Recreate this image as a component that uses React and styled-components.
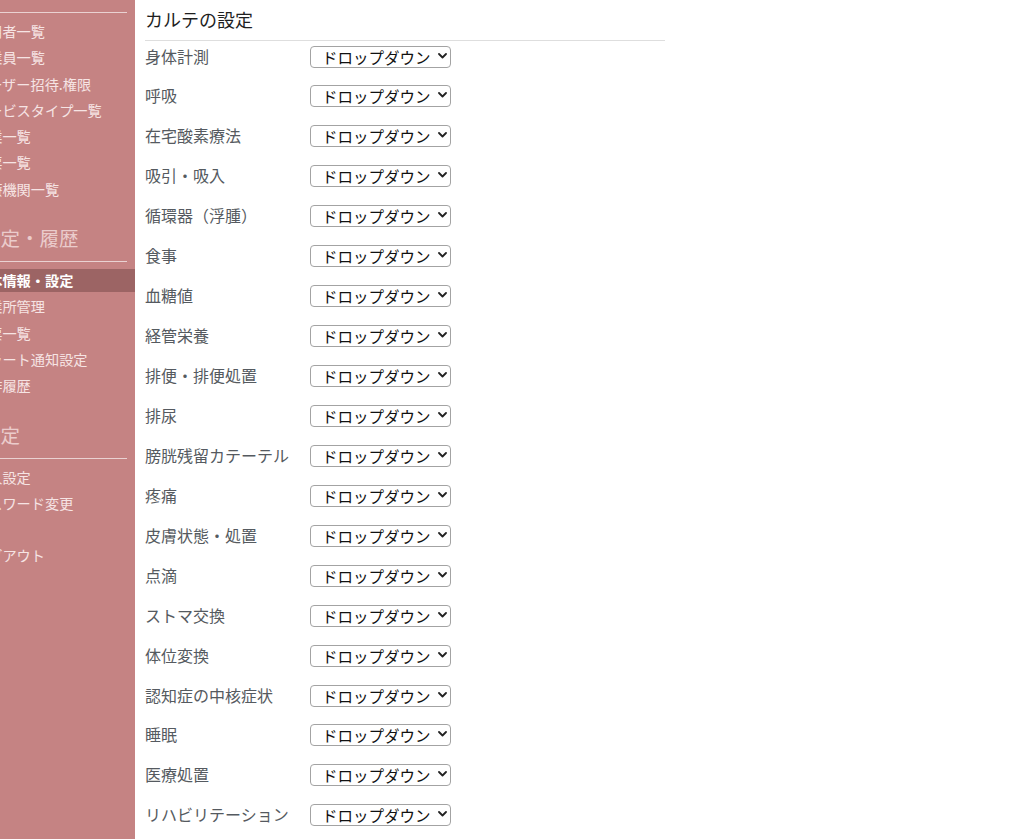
import React from "react";
import styled, { createGlobalStyle } from "styled-components";

const Global = createGlobalStyle`
  html, body { margin: 0; padding: 0; background: #fff; }
  body { font-family: "Noto Sans CJK JP", "Noto Sans", sans-serif; overflow: hidden; }
  * { box-sizing: border-box; }
`;

const Layout = styled.div`
  display: flex;
  width: 1023px;
  height: 839px;
  overflow: hidden;
`;

const Sidebar = styled.nav`
  flex: 0 0 135px;
  background: #c58383;
  overflow: hidden;
  height: 100%;
`;

const SideInner = styled.div`
  width: 161px;
  margin-left: -26px;
  padding-top: 12px;
`;

const Section = styled.div`
  display: flex;
  flex-direction: column;
  & + & { margin-top: 21px; }
`;

const SectionTitle = styled.div`
  font-size: 19.5px;
  line-height: 26px;
  color: #ebcccc;
  padding-left: 7px;
  margin-bottom: 10px;
  white-space: nowrap;
`;

const Rule = styled.div`
  height: 1px;
  background: #ead2d2;
  margin: 0 8px 7px 8px;
`;

const Item = styled.div`
  font-size: 14.2px;
  line-height: 17px;
  padding: 3px 0 3px 0;
  margin-bottom: 3.3px;
  white-space: nowrap;
  color: ${(p) => (p.$active ? "#ffffff" : "#f6e4e4")};
  font-weight: ${(p) => (p.$active ? 700 : 400)};
  background: ${(p) => (p.$active ? "#9c6464" : "transparent")};
  min-height: 23px;
`;

const Main = styled.main`
  flex: 1;
  padding: 0 10px;
`;

const Title = styled.h1`
  margin: 0;
  width: 520px;
  height: 41px;
  font-size: 18px;
  font-weight: 400;
  line-height: 38px;
  color: #1f1f1f;
  border-bottom: 1px solid #dedede;
`;

const Rows = styled.div`
  display: flex;
  flex-direction: column;
  gap: 17.95px;
  padding-top: 3.5px;
`;

const Row = styled.div`
  display: flex;
  align-items: center;
  height: 22px;
`;

const Label = styled.label`
  width: 165px;
  font-size: 16px;
  color: #555a60;
  white-space: nowrap;
`;

const SelectWrap = styled.div`
  position: relative;
  width: 141px;
  height: 22px;
`;

const Select = styled.select`
  appearance: none;
  -webkit-appearance: none;
  width: 100%;
  height: 100%;
  border: 1px solid #a3a3a3;
  border-radius: 4px;
  background: #fff;
  color: #111;
  font-family: "Noto Sans CJK JP", sans-serif;
  font-size: 15.5px;
  line-height: 20px;
  padding: 0 0 0 11px;
  margin: 0;
`;

const Chevron = styled.svg`
  position: absolute;
  right: 4.5px;
  top: 8px;
  width: 9px;
  height: 6px;
  pointer-events: none;
`;

const sections = [
  {
    title: null,
    items: [
      "利用者一覧",
      "従業員一覧",
      "ユーザー招待.権限",
      "サービスタイプ一覧",
      "事業一覧",
      "帳票一覧",
      "医療機関一覧",
    ],
  },
  {
    title: "設定・履歴",
    items: ["基本情報・設定", "事業所管理", "帳票一覧", "アラート通知設定", "操作履歴"],
    active: 0,
  },
  {
    title: "設定",
    items: ["個人設定", "パスワード変更", "", "ログアウト"],
  },
];

const fields = [
  "身体計測",
  "呼吸",
  "在宅酸素療法",
  "吸引・吸入",
  "循環器（浮腫）",
  "食事",
  "血糖値",
  "経管栄養",
  "排便・排便処置",
  "排尿",
  "膀胱残留カテーテル",
  "疼痛",
  "皮膚状態・処置",
  "点滴",
  "ストマ交換",
  "体位変換",
  "認知症の中核症状",
  "睡眠",
  "医療処置",
  "リハビリテーション",
];

export default function App() {
  return (
    <Layout>
      <Global />
      <Sidebar>
        <SideInner>
          {sections.map((s, si) => (
            <Section key={si}>
              {s.title && <SectionTitle>{s.title}</SectionTitle>}
              <Rule />
              {s.items.map((it, ii) => (
                <Item key={ii} $active={s.active === ii}>
                  {it}
                </Item>
              ))}
            </Section>
          ))}
        </SideInner>
      </Sidebar>
      <Main>
        <Title>カルテの設定</Title>
        <Rows>
          {fields.map((f) => (
            <Row key={f}>
              <Label>{f}</Label>
              <SelectWrap>
                <Select defaultValue="d">
                  <option value="d">ドロップダウン</option>
                </Select>
                <Chevron viewBox="0 0 9 6">
                  <path d="M1 1 L4.5 4.5 L8 1" fill="none" stroke="#222" strokeWidth="1.8" strokeLinecap="round" strokeLinejoin="round" />
                </Chevron>
              </SelectWrap>
            </Row>
          ))}
        </Rows>
      </Main>
    </Layout>
  );
}
